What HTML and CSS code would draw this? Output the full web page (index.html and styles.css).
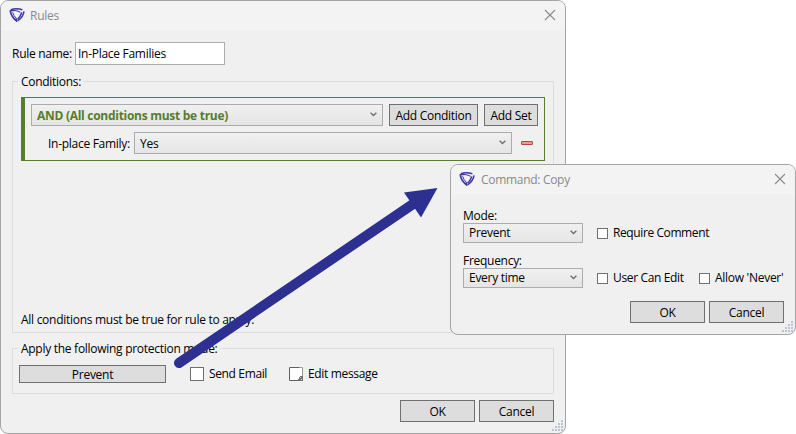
FILE: index.html
```
<!DOCTYPE html>
<html lang="en">
<head>
<meta charset="utf-8">
<title>Rules</title>
<link rel="stylesheet" href="styles.css">
</head>
<body>
<svg width="0" height="0" class="defs">
  <symbol id="logo" viewBox="0 0 16 14">
    <g fill="none" stroke="#3a36a3">
      <path d="M1.800 1.700Q7-.1 13.400 1.700" stroke-width="1.500"/>
      <path d="M.6 2.600H4.500Q8.500 2.300 11.600 4.400" stroke-width="1.100"/>
      <path d="M1.300 3.200Q2.200 8.700 7.400 12.800V10.400" stroke-width="1.700"/>
      <path d="M3.600 4.200Q4.600 7.800 7.600 10.600" stroke-width="1"/>
      <path d="M15 3.400Q14.300 9 8.600 13" stroke-width="1.500"/>
      <path d="M12.800 4.500Q11.600 8.300 8.600 11.200" stroke-width="1.500"/>
    </g>
  </symbol>
  <symbol id="close" viewBox="0 0 12 12"><path d="M1 1L11 11M11 1L1 11" fill="none" stroke="#8a8a8a" stroke-width="1.1"/></symbol>
  <symbol id="chevron" viewBox="0 0 7 5"><path d="M.6.8L3.5 3.6L6.4.8" fill="none" stroke="#707070" stroke-width="1.4"/></symbol>
  <symbol id="grip" viewBox="0 0 12 12"><path d="M9 0h2v2h-2zM6 3h2v2h-2zM9 3h2v2h-2zM3 6h2v2h-2zM6 6h2v2h-2zM9 6h2v2h-2zM0 9h2v2h-2zM3 9h2v2h-2zM6 9h2v2h-2zM9 9h2v2h-2z" fill="#bac3d5"/></symbol>
</svg>

<main class="window rules">
  <header class="titlebar">
    <svg class="logo"><use href="#logo"/></svg><h1>Rules</h1>
    <svg class="close"><use href="#close"/></svg>
  </header>
  <div class="name-row"><label>Rule name:</label><div class="field">In-Place Families</div></div>
  <section class="group conditions">
    <div class="legend"><span>Conditions:</span></div>
    <div class="set">
      <div class="row">
        <div class="combo operator"><span>AND (All conditions must be true)</span><svg class="chevron"><use href="#chevron"/></svg></div>
        <button class="add-condition">Add Condition</button><button class="add-set">Add Set</button>
      </div>
      <div class="row rule">
        <label>In-place Family:</label>
        <div class="combo value"><span>Yes</span><svg class="chevron"><use href="#chevron"/></svg></div>
        <i class="minus"></i>
      </div>
    </div>
    <p class="hint">All conditions must be true for rule to apply.</p>
  </section>
  <section class="group protection">
    <div class="legend"><span>Apply the following protection mode:</span></div>
    <div class="modes">
      <button class="mode">Prevent</button>
      <i class="check large"></i><span class="send">Send Email</span>
      <svg class="note" viewBox="0 0 14 14"><path d="M0 0h14v14H0z" fill="#fff"/><path d="M10 .5H.5v13H10" fill="none" stroke="#606060"/><path d="M10 .5h3.5V9" fill="none" stroke="#999"/><path d="M9 12h1v-2h1V9h3v5H9z" fill="#707070"/><path d="M11 10h1v1h-1zM12 12h1v1h-1z" fill="#ddd"/></svg>
      <span class="edit">Edit message</span>
    </div>
  </section>
  <footer class="actions"><button>OK</button><button>Cancel</button></footer>
  <svg class="grip"><use href="#grip"/></svg>
</main>

<svg class="arrow" viewBox="0 0 796 434"><path d="M179 363L416 202" stroke="#2d2f91" stroke-width="10" stroke-linecap="round"/><path d="M437.500 188L404 192.500L421 217.500Z" fill="#2d2f91"/></svg>

<section class="window command">
  <header class="titlebar">
    <svg class="logo"><use href="#logo"/></svg><h2>Command: Copy</h2>
    <svg class="close"><use href="#close"/></svg>
  </header>
  <div class="options">
    <label>Mode:</label>
    <div class="option-row">
      <div class="combo"><span>Prevent</span><svg class="chevron"><use href="#chevron"/></svg></div>
      <i class="check"></i><span class="require">Require Comment</span>
    </div>
    <label>Frequency:</label>
    <div class="option-row">
      <div class="combo"><span>Every time</span><svg class="chevron"><use href="#chevron"/></svg></div>
      <i class="check"></i><span class="user">User Can Edit</span>
      <i class="check"></i><span class="never">Allow 'Never'</span>
    </div>
  </div>
  <footer class="actions"><button>OK</button><button>Cancel</button></footer>
  <svg class="grip"><use href="#grip"/></svg>
</section>
</body>
</html>
```
FILE: styles.css
```
* { box-sizing: border-box; }
body { margin: 0; width: 796px; height: 434px; position: relative; overflow: hidden; background: #fff; color: #000; font: 12px/16px "Open Sans", "Noto Sans", sans-serif; letter-spacing: -.28px; white-space: nowrap; }
.defs { position: absolute; }
h1, h2, p { margin: 0; font: inherit; }
svg { display: block; flex: none; }
.window { position: absolute; display: flex; flex-direction: column; background: #f0f0f0; border: 1px solid #a5a5a5; border-radius: 8px; }
.rules { left: 0; top: 0; width: 566px; height: 434px; }
.command { left: 450px; top: 164px; width: 346px; height: 171px; }
.titlebar { display: flex; height: 30px; padding: 7px 9px 0 8px; background: #f3f3f3; border-radius: 7px 7px 0 0; color: #8a8a8a; }
.logo { width: 16px; height: 14px; }
.titlebar h1, .titlebar h2 { margin: 0 auto 0 5px; }
.titlebar h2 { margin-left: 6px; letter-spacing: -.3px; }
.close { width: 12px; height: 12px; margin-top: 1px; }
.name-row { display: flex; align-items: center; height: 23px; margin: 11px 0 0 11px; }
.name-row label { width: 63px; }
.field { width: 150px; height: 23px; padding: 3px 2px; background: #fff; border: 1px solid #abadb3; }
.group { margin: 0 11px; border: 1px solid #dcdcdc; }
.legend { height: 16px; margin: -8px 0 0 5px; }
.legend span { display: inline-block; background: #f0f0f0; padding: 0 3px; }
.conditions { height: 252px; margin-top: 16px; }
.set { height: 64px; margin: 7px 8px 0; padding: 6px; border: 1px solid #567d2b; border-left-width: 4px; }
.row { display: flex; gap: 6px; height: 22px; }
.rule { margin-top: 6px; align-items: center; }
.rule label { width: 82px; margin: 1px -2px 0 17px; }
.combo { display: flex; align-items: center; justify-content: space-between; width: 120px; height: 20px; padding: 0 5px; background: linear-gradient(#f0f0f0, #e5e5e5); border: 1px solid #acacac; }
.chevron { width: 7px; height: 5px; margin-top: -2px; }
.operator { width: 352px; height: 22px; padding-top: 1px; color: #567d2b; font-weight: 700; }
.value { width: 378px; height: 22px; padding-top: 1px; }
.minus { width: 12px; height: 4px; margin-left: 3px; background: #f0998d; border: 1px solid #b9443b; border-radius: 1px; }
button { width: 75px; height: 22px; padding: 1px 0 0; background: #ddd; border: 1px solid #707070; border-radius: 0; color: #000; font: inherit; letter-spacing: inherit; text-align: center; }
.add-condition { width: 89px; }
.add-set { width: 54px; }
.hint { margin: 151px 0 0 8px; }
.protection { height: 46px; margin-top: 15px; }
.modes { display: flex; align-items: center; height: 18px; margin: 8px 0 0 6px; }
.mode { width: 147px; height: 18px; line-height: 16px; }
.check { flex: none; width: 11px; height: 11px; margin: 0 5px 0 14px; background: #fff; border: 1px solid #707070; }
.check.large { width: 14px; height: 14px; margin-left: 24px; }
.send { width: 80px; letter-spacing: -.36px; }
.note { width: 14px; height: 14px; margin-right: 5px; }
.edit { letter-spacing: -.34px; }
.actions { display: flex; justify-content: flex-end; gap: 4px; padding: 6px 11px 0 0; }
.grip { position: absolute; right: 1px; bottom: 1px; width: 12px; height: 12px; }
.arrow { position: absolute; left: 0; top: 0; width: 796px; height: 434px; }
.options { margin: 12px 0 0 12px; }
.options label { display: block; height: 16px; line-height: 17px; }
.option-row { display: flex; align-items: center; height: 20px; margin-bottom: 9px; }
.require { letter-spacing: -.4px; }
.user { width: 72px; letter-spacing: -.36px; }
.command .actions { padding-top: 4px; }
```
